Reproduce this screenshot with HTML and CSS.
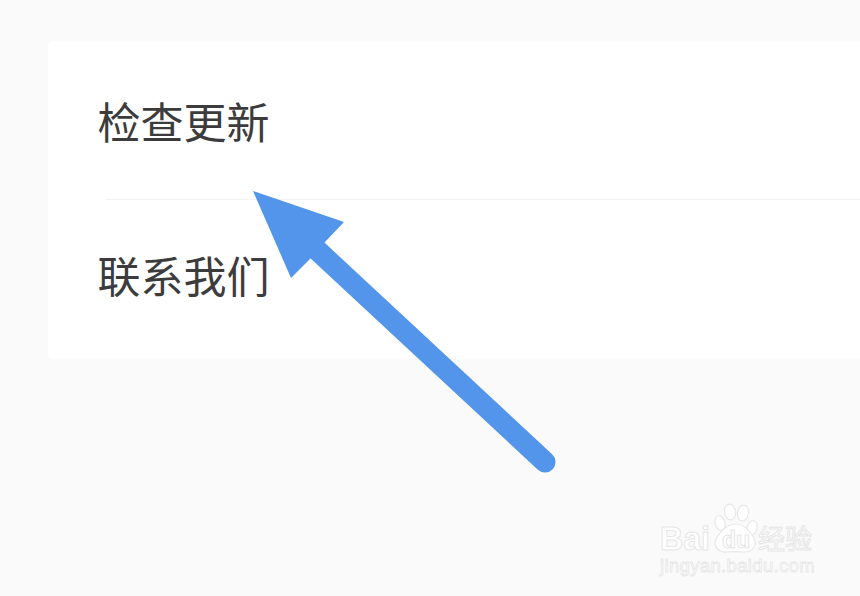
FILE: index.html
```html
<!DOCTYPE html>
<html lang="zh">
<head>
<meta charset="utf-8">
<title>设置</title>
<link rel="stylesheet" href="styles.css">
</head>
<body>
<main class="card">
  <div class="row row-first"><span class="label">检查更新</span></div>
  <div class="divider"></div>
  <div class="row row-last"><span class="label">联系我们</span></div>
</main>
<svg class="arrow" viewBox="0 0 860 596" aria-hidden="true">
  <path class="arrow-head" d="M253 191L344 222L325 242L310 259L291 278Z"/>
  <path class="arrow-shaft" d="M317 250L545 462"/>
</svg>
<svg class="mark" viewBox="0 0 860 596" aria-label="Baidu 经验">
  <g class="paw">
    <ellipse cx="720" cy="523" rx="5" ry="7.5" transform="rotate(-15 720 523)"/>
    <ellipse cx="730" cy="512" rx="5.5" ry="8" transform="rotate(-8 730 512)"/>
    <ellipse cx="743" cy="513" rx="5.5" ry="8" transform="rotate(10 743 513)"/>
    <ellipse cx="752" cy="528" rx="5" ry="7.5" transform="rotate(15 752 528)"/>
    <path d="M736 524C745 524 751 533 754 538C758 546 752 552 744 552C738 552 733 551 727 552C719 553 713 546 716 539C720 532 727 524 736 524Z"/>
  </g>
  <text class="mark-text bai" x="660" y="550" textLength="50" lengthAdjust="spacingAndGlyphs">Bai</text>
  <text class="mark-text du" x="722" y="548">du</text>
  <text class="mark-text jy" x="758" y="549">经验</text>
  <text class="mark-text url" x="660" y="572">jingyan.baidu.com</text>
</svg>
</body>
</html>
```
FILE: styles.css
```css
* { box-sizing: border-box; }
html, body { margin: 0; height: 100%; }
body {
  position: relative;
  width: 860px;
  height: 596px;
  overflow: hidden;
  background: #fafafa;
  padding: 41px 0 0 48px;
  font-family: "Noto Sans CJK SC", "Noto Sans", sans-serif;
}
.card {
  width: 830px;
  height: 318px;
  background: #fff;
  border-radius: 6px;
}
.row {
  padding-left: 49.5px;
}
.row-first {
  height: 158px;
  padding-top: 58px;
}
.row-last {
  height: 159px;
  padding-top: 53px;
}
.label {
  display: block;
  font-size: 43px;
  font-weight: 400;
  line-height: 1;
  color: #3c3c3c;
}
.divider {
  height: 1px;
  margin-left: 58px;
  background: #f3f3f3;
}
.arrow, .mark {
  position: absolute;
  left: 0;
  top: 0;
  width: 860px;
  height: 596px;
}
.arrow-head { fill: #5295ea; }
.arrow-shaft {
  fill: none;
  stroke: #5295ea;
  stroke-width: 21;
  stroke-linecap: round;
}
.paw ellipse, .paw path {
  fill: #fff;
  stroke: #e8e8e8;
  stroke-width: 1.2;
}
.mark-text {
  fill: #fff;
  stroke: #e6e6e6;
  stroke-width: 1;
  font-family: "Liberation Sans", sans-serif;
}
.bai { font-size: 34px; font-weight: 700; }
.du { font-size: 23px; font-weight: 700; }
.jy { font-size: 27px; font-family: "Noto Sans CJK SC", sans-serif; }
.url { font-size: 18.5px; letter-spacing: 0.35px; stroke-width: 0.8; }
```
